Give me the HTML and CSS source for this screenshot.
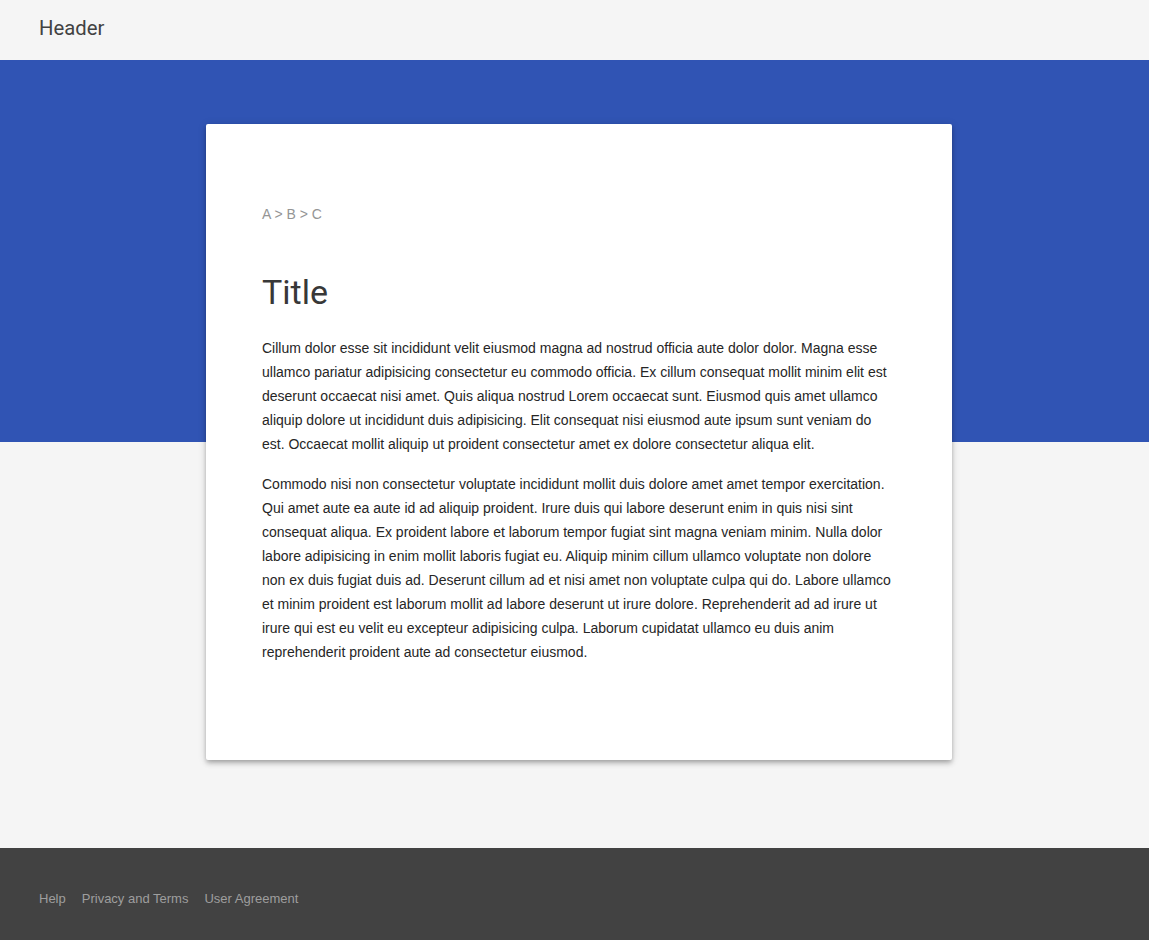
FILE: index.html
```html
<!DOCTYPE html>
<html lang="en">
<head>
<meta charset="utf-8">
<title>Text-heavy page</title>
<link rel="stylesheet" href="styles.css">
</head>
<body>
<header class="header">
  <span class="header-title">Header</span>
</header>
<div class="ribbon"></div>
<main class="main">
  <article class="card">
    <div class="crumbs">A &gt; B &gt; C</div>
    <h3 class="title">Title</h3>
    <p class="text">Cillum dolor esse sit incididunt velit eiusmod magna ad nostrud officia aute dolor dolor. Magna esse ullamco pariatur adipisicing consectetur eu commodo officia. Ex cillum consequat mollit minim elit est deserunt occaecat nisi amet. Quis aliqua nostrud Lorem occaecat sunt. Eiusmod quis amet ullamco aliquip dolore ut incididunt duis adipisicing. Elit consequat nisi eiusmod aute ipsum sunt veniam do est. Occaecat mollit aliquip ut proident consectetur amet ex dolore consectetur aliqua elit.</p>
    <p class="text">Commodo nisi non consectetur voluptate incididunt mollit duis dolore amet amet tempor exercitation. Qui amet aute ea aute id ad aliquip proident. Irure duis qui labore deserunt enim in quis nisi sint consequat aliqua. Ex proident labore et laborum tempor fugiat sint magna veniam minim. Nulla dolor labore adipisicing in enim mollit laboris fugiat eu. Aliquip minim cillum ullamco voluptate non dolore non ex duis fugiat duis ad. Deserunt cillum ad et nisi amet non voluptate culpa qui do. Labore ullamco et minim proident est laborum mollit ad labore deserunt ut irure dolore. Reprehenderit ad ad irure ut irure qui est eu velit eu excepteur adipisicing culpa. Laborum cupidatat ullamco eu duis anim reprehenderit proident aute ad consectetur eiusmod.</p>
  </article>
</main>
<footer class="footer">
  <a class="footer-link" href="#">Help</a>
  <a class="footer-link" href="#">Privacy and Terms</a>
  <a class="footer-link" href="#">User Agreement</a>
</footer>
</body>
</html>
```
FILE: styles.css
```css
html, body {
  margin: 0;
  padding: 0;
}
body {
  background: #f5f5f5;
  font-family: "Liberation Sans", Arial, sans-serif;
  font-size: 14px;
  line-height: 24px;
  color: #212121;
}
.header {
  height: 60px;
  box-sizing: border-box;
  display: flex;
  align-items: center;
  padding: 0 40px 4px 39px;
  background: #f5f5f5;
}
.header-title {
  font-family: Roboto, "Liberation Sans", sans-serif;
  font-size: 20.3px;
  line-height: 24px;
  color: #424242;
}
.ribbon {
  height: 382px;
  background: #3054b4;
}
.main {
  margin-top: -318px;
  padding: 0 0 88px 206px;
}
.card {
  width: 746px;
  box-sizing: border-box;
  padding: 80px 56px 64px;
  background: #fff;
  border-radius: 2px;
  box-shadow: 0 4px 5px 0 rgba(0,0,0,.14), 0 1px 10px 0 rgba(0,0,0,.12), 0 2px 4px -1px rgba(0,0,0,.2);
}
.crumbs {
  font-size: 14px;
  line-height: 20px;
  color: #959595;
}
.title {
  margin: 48px 0 24px;
  font-family: Roboto, "Liberation Sans", sans-serif;
  font-size: 34px;
  line-height: 40px;
  font-weight: 400;
  color: #383838;
}
.text {
  margin: 0 0 16px;
  font-size: 14px;
  line-height: 24px;
  color: #262626;
}
.text:last-child {
  margin-bottom: 32px;
}
.footer {
  height: 92px;
  box-sizing: border-box;
  padding: 41px 40px 31px 39px;
  background: #424242;
  display: flex;
  gap: 16px;
  align-items: flex-start;
}
.footer-link {
  font-size: 13px;
  line-height: 20px;
  color: #9e9e9e;
  text-decoration: none;
}
```
